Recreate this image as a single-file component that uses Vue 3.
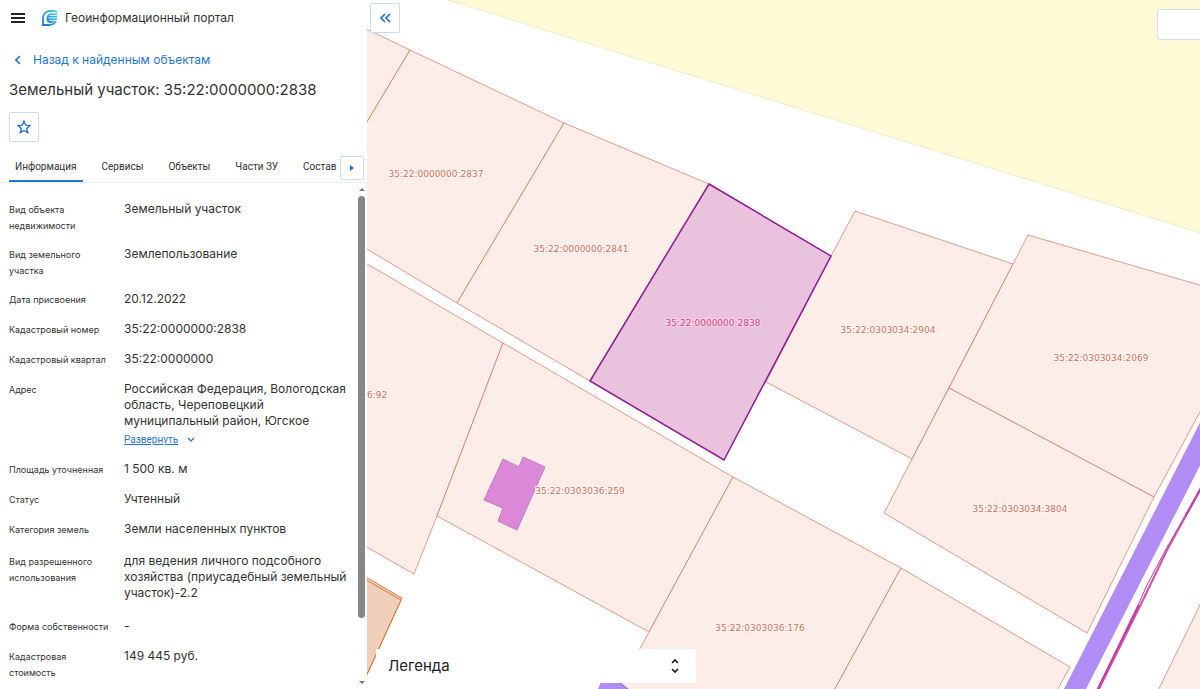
<script setup>
import { ref } from 'vue';

const tabs = ['Информация', 'Сервисы', 'Объекты', 'Части ЗУ', 'Состав'];
const activeTab = ref(0);

const rows = [
  { label: 'Вид объекта недвижимости', value: 'Земельный участок' },
  { label: 'Вид земельного участка', value: 'Землепользование' },
  { label: 'Дата присвоения', value: '20.12.2022' },
  { label: 'Кадастровый номер', value: '35:22:0000000:2838' },
  { label: 'Кадастровый квартал', value: '35:22:0000000' },
  {
    label: 'Адрес',
    value: 'Российская Федерация, Вологодская область, Череповецкий муниципальный район, Югское',
    more: true,
  },
  { label: 'Площадь уточненная', value: '1 500 кв. м' },
  { label: 'Статус', value: 'Учтенный' },
  { label: 'Категория земель', value: 'Земли населенных пунктов' },
  {
    label: 'Вид разрешенного использования',
    value: 'для ведения личного подсобного хозяйства (приусадебный земельный участок)-2.2',
    tall: true,
  },
  { label: 'Форма собственности', value: '-' },
  { label: 'Кадастровая стоимость', value: '149 445 руб.' },
];

const parcels = [
  '300,-3 410,50 324,194 280,170',
  '410,50 564,123 457,303 300,209 324,194',
  '564,123 709,184 590,381 457,303',
  '855,211 1013,264 912,459 766,382 831,256',
  '1028,235 1220,291 1220,375 1154,497 949,388 1013,264',
  '949,388 1154,497 1087,633 884,513 912,459',
  '300,225 503,343 437,516 414,574 300,509',
  '503,343 733,477 649,632 437,516',
  '733,477 901,568 825,707 608,707 649,632',
  '901,568 1070,667 1048,707 825,707',
  '1220,564 1150,707 1240,707',
];

const labels = [
  { text: '35:22:0000000:2837', x: 436, y: 177 },
  { text: '35:22:0000000:2841', x: 581, y: 252 },
  { text: '35:22:0303034:2904', x: 888, y: 333 },
  { text: '35:22:0303034:2069', x: 1101, y: 361 },
  { text: '35:22:0303034:3804', x: 1020, y: 512 },
  { text: '6:92', x: 377, y: 398 },
  { text: '35:22:0303036:259', x: 580, y: 494 },
  { text: '35:22:0303036:176', x: 760, y: 631 },
];
</script>

<template>
  <div class="portal">
    <aside class="panel">
      <header class="top">
        <button class="plain" type="button" aria-label="Меню">
          <svg width="14" height="12" viewBox="0 0 14 12">
            <path d="M0 2H14M0 6H14M0 10H14" stroke="#222" stroke-width="2" />
          </svg>
        </button>
        <svg class="logo" width="16" height="16" viewBox="0 0 16 16">
          <defs>
            <linearGradient id="logoFill" gradientUnits="userSpaceOnUse" x1="0" y1="14" x2="15" y2="2">
              <stop offset="0" stop-color="#1d6fe8" />
              <stop offset="1" stop-color="#35d3dc" />
            </linearGradient>
          </defs>
          <path
            d="M15 2C13 1 10 .800 8 1C4 1.400 1 4 1 8v7h6c3 0 5-1 7-3.500"
            fill="none"
            stroke="url(#logoFill)"
            stroke-width="1.800"
          />
          <path
            d="M15 3.500H9.500C6.500 3.500 4.500 5.500 4.500 8.500S6 13 8 13c2 0 4-.5 5.500-2H7.500v-1H15V8.500H6.500v-1H15V6H7.500V5H15z"
            fill="url(#logoFill)"
          />
        </svg>
        <span class="brand">Геоинформационный портал</span>
      </header>

      <a class="back" href="#">
        <svg width="6" height="10" viewBox="0 0 6 10">
          <path d="M5 1L1 5l4 4" fill="none" stroke="#1f6fd6" stroke-width="1.600" />
        </svg>
        Назад к найденным объектам
      </a>

      <h1 class="title">Земельный участок: 35:22:0000000:2838</h1>

      <button class="square star" type="button" aria-label="В избранное">
        <svg width="14" height="14" viewBox="0 0 14 14">
          <path
            d="M7 1.200l1.700 4 4.300.4-3.300 2.800 1 4.200L7 10.400l-3.700 2.200 1-4.200L1 5.600l4.300-.4z"
            fill="none"
            stroke="#1f6fd6"
            stroke-width="1.300"
          />
        </svg>
      </button>

      <nav class="tabs">
        <button
          v-for="(tab, i) in tabs"
          :key="tab"
          type="button"
          :class="['tab', { active: i === activeTab }]"
          @click="activeTab = i"
        >
          {{ tab }}
        </button>
        <button class="square next" type="button" aria-label="Следующие вкладки">
          <svg width="4" height="6" viewBox="0 0 4 6"><path d="M0 0l4 3-4 3z" fill="#1f6fd6" /></svg>
        </button>
      </nav>

      <div class="body">
        <dl class="info">
          <div v-for="row in rows" :key="row.label" :class="['row', { tall: row.tall }]">
            <dt>{{ row.label }}</dt>
            <dd>
              {{ row.value }}
              <div v-if="row.more" class="more">
                <a href="#">Развернуть</a>
                <svg width="8" height="6" viewBox="0 0 8 6">
                  <path d="M1 1l3 3 3-3" fill="none" stroke="#1f6fd6" stroke-width="1.200" />
                </svg>
              </div>
            </dd>
          </div>
        </dl>
        <div class="scroll">
          <span class="arrow up"></span>
          <span class="thumb"></span>
          <span class="arrow down"></span>
        </div>
      </div>
    </aside>

    <main class="map">
      <svg class="canvas" viewBox="367 0 833 689" preserveAspectRatio="xMinYMin slice">
        <polygon points="448,0 1220,239 1220,-10 416,-10" fill="#fefad5" stroke="#eceecb" />
        <polygon v-for="points in parcels" :key="points" class="parcel" :points="points" />
        <g stroke="#cf7f45" fill="#efcfba">
          <polygon points="340,562 402,598 360,690 340,690" />
          <path d="M340 565L401 600L358 694" fill="none" />
        </g>
        <polygon points="1210,403 1064,689 1054,709 1076,709 1086,689 1210,446" fill="#b18cf5" />
        <polygon points="598,689 601,682 619,682 628,689" fill="#b18cf5" />
        <path d="M619 682l9 7" stroke="#9055c0" />
        <path d="M1210 472L1167 550L1143 600L1089 709" fill="none" stroke="#d24fae" stroke-width="2" />
        <path d="M1210 472L1165 551L1147 585L1139 603L1088 709" fill="none" stroke="#c43fa0" stroke-width="1" />
        <path d="M1139 605L1088 709M1210 472L1186 515" fill="none" stroke="#c43fa0" stroke-width="2" />
        <polygon
          points="503,459 519,467 523,457 545,467 517,530 498,521 503,508 484,500"
          fill="#dc88d8"
          stroke="#c678c0"
        />
        <polygon class="selected" points="709,184 831,256 724,460 590,381" />
        <text v-for="label in labels" :key="label.text" :x="label.x" :y="label.y">{{ label.text }}</text>
        <text class="current" x="713" y="326">35:22:0000000:2838</text>
      </svg>

      <button class="square collapse" type="button" aria-label="Свернуть панель">
        <svg width="11" height="10" viewBox="0 0 11 10">
          <path d="M5 1L1 5l4 4M10 1L6 5l4 4" fill="none" stroke="#1f6fd6" stroke-width="1.700" />
        </svg>
      </button>
      <input class="search" type="text" aria-label="Поиск" />
      <button class="legend" type="button">
        Легенда
        <svg width="8" height="14" viewBox="0 0 8 14">
          <path d="M1 4l3-3 3 3M1 10l3 3 3-3" fill="none" stroke="#111" stroke-width="1.600" />
        </svg>
      </button>
    </main>
  </div>
</template>

<style>
body {
  margin: 0;
  overflow: hidden;
}
</style>

<style scoped>
.portal {
  display: flex;
  height: 100vh;
  font-family: Inter, sans-serif;
  font-size: 12px;
  line-height: 16px;
  color: #333;
  background: #fff;
}

button {
  font: inherit;
  color: inherit;
  padding: 0;
  border: 0;
  background: none;
}

svg {
  display: block;
  flex: none;
}

.panel {
  display: flex;
  flex-direction: column;
  width: 367px;
  flex: none;
  overflow: hidden;
}

.top {
  display: flex;
  align-items: center;
  height: 36px;
  flex: none;
  padding-left: 11px;
}

.logo {
  margin: 0 7px 0 17px;
}

.back {
  display: flex;
  align-items: center;
  gap: 12px;
  margin-top: 16px;
  padding-left: 15px;
  color: #1f76d8;
  text-decoration: none;
}

.title {
  margin: 12px 0 0 9px;
  font-size: 15px;
  font-weight: 400;
  line-height: 20px;
}

.square {
  display: flex;
  align-items: center;
  justify-content: center;
  box-sizing: border-box;
  width: 30px;
  height: 30px;
  flex: none;
  background: #fff;
  border: 1px solid #c9dcf3;
  border-radius: 2px;
}

.star {
  margin: 12px 0 0 9px;
}

.tabs {
  display: flex;
  gap: 13px;
  position: relative;
  margin: 10px 0 0;
  padding-left: 9px;
  height: 30px;
  flex: none;
  border-bottom: 1px solid #e8f0f8;
}

.tab {
  padding: 2px 6px 0;
  font-family: Roboto, sans-serif;
  font-size: 10px;
  border-bottom: 2px solid transparent;
}

.tab.active {
  border-color: #1f76d8;
}

.next {
  position: absolute;
  top: 4px;
  right: 3px;
  width: 24px;
  height: 24px;
}

.body {
  display: flex;
  flex: 1;
  min-height: 0;
}

.info {
  flex: 1;
  margin: 0;
  padding: 18px 6px 0 9px;
  overflow: hidden;
}

.row {
  display: flex;
  gap: 15px;
  min-height: 17px;
  padding-bottom: 13px;
}

.row.tall {
  padding-top: 2px;
  padding-bottom: 17px;
}

dt {
  width: 100px;
  flex: none;
  margin-bottom: -1px;
  padding-top: 1px;
  font-size: 9px;
}

dd {
  margin: 0;
}

.more {
  display: flex;
  align-items: center;
  gap: 9px;
  padding-top: 3px;
  font-family: Roboto, sans-serif;
  font-size: 10px;
}

.more a {
  color: #1f76d8;
}

.scroll {
  display: flex;
  flex-direction: column;
  align-items: center;
  width: 7px;
  flex: none;
  padding: 5px 2px 5px 0;
}

.arrow {
  border: 3px solid transparent;
}

.up {
  border-top: 0;
  border-bottom-color: #777;
}

.down {
  margin-top: auto;
  border-bottom: 0;
  border-top-color: #777;
}

.thumb {
  width: 7px;
  height: 85%;
  margin-top: 5px;
  border-radius: 4px;
  background: #878787;
}

.map {
  position: relative;
  flex: 1;
  min-width: 0;
  overflow: hidden;
}

.canvas {
  width: 100%;
  height: 100%;
}

.parcel {
  fill: #fcede8;
  stroke: rgba(205, 80, 55, 0.55);
}

.selected {
  fill: #e9c2de;
  stroke: #8f1a94;
  stroke-width: 1.5;
}

.canvas text {
  font-family: "DejaVu Sans", sans-serif;
  font-size: 9px;
  text-anchor: middle;
  fill: #d0705a;
  stroke: #fff5f2;
  stroke-width: 2px;
  paint-order: stroke;
}

.canvas .current {
  fill: #d2487c;
  stroke: #f2d4e8;
}

.collapse {
  position: absolute;
  top: 3px;
  left: 3px;
}

.search {
  position: absolute;
  top: 9px;
  right: -4px;
  width: 47px;
  height: 31px;
  box-sizing: border-box;
  border: 1px solid #d3dfec;
  border-radius: 2px;
  background: #fff;
}

.legend {
  position: absolute;
  left: 9px;
  bottom: 6px;
  display: flex;
  align-items: center;
  justify-content: space-between;
  box-sizing: border-box;
  width: 320px;
  height: 34px;
  padding: 0 17px 0 12px;
  font-size: 15px;
  color: #222;
  background: #fff;
}
</style>
